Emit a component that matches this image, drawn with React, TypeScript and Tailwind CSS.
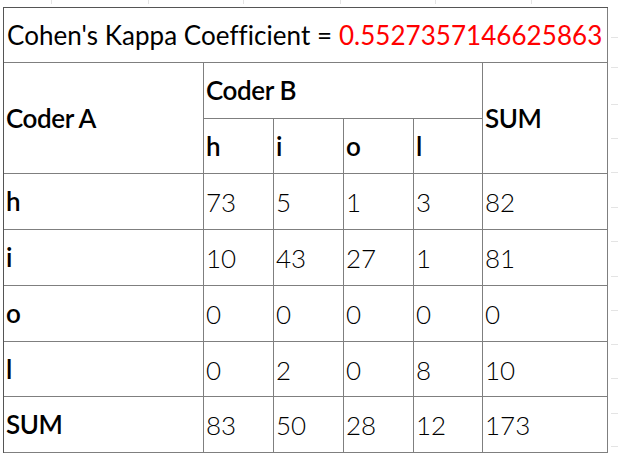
const cols = ['h', 'i', 'o', 'l'];

const rows: { label: string; values: number[] }[] = [
  { label: 'h', values: [73, 5, 1, 3, 82] },
  { label: 'i', values: [10, 43, 27, 1, 81] },
  { label: 'o', values: [0, 0, 0, 0, 0] },
  { label: 'l', values: [0, 2, 0, 8, 10] },
  { label: 'SUM', values: [83, 50, 28, 12, 173] },
];

const cell = 'flex items-center border-r border-b border-[#7f7f7f] pl-[2px]';
const label = `${cell} text-[26px] font-semibold tracking-[-0.4px] text-black`;
const num = `${cell} pt-[2px] text-[26px] font-light text-black`;

export default function App() {
  return (
    <div
      className="relative h-[460px] w-[618px] overflow-hidden bg-white"
      style={{ fontFamily: 'Lato, "Open Sans", sans-serif' }}
    >
      {/* faint sheet gridline stubs around the table */}
      {[51, 148, 243, 340, 435, 531].map((x) => (
        <div key={x} className="absolute top-0 h-[4px] w-px bg-[#e4e4e4]" style={{ left: x }} />
      ))}
      {[37, 67, 104, 138, 172, 207, 241, 276, 310, 344, 378, 413, 446].map((y) => (
        <div key={y} className="absolute right-0 h-px w-[7px] bg-[#e4e4e4]" style={{ top: y }} />
      ))}

      <div className="ml-[3px] mt-[7px] grid w-[605px] grid-cols-[200px_70px_70px_70px_69px_125px] grid-rows-[55px_56px_55px_56px_56px_56px_55px_56px] border-l border-t border-[#555]">
        <div className={`${cell} col-span-6 pl-[3px] text-[26px] tracking-[0.05px] whitespace-nowrap text-black`}>
          Cohen's Kappa Coefficient =&nbsp;<span className="text-[#ff0000]">0.5527357146625863</span>
        </div>

        <div className={`${label} row-span-2`}>Coder A</div>
        <div className={`${label} col-span-4`}>Coder B</div>
        <div className={`${label} row-span-2`}>SUM</div>
        {cols.map((c) => (
          <div key={c} className={label}>
            {c}
          </div>
        ))}

        {rows.map((r) => (
          <Row key={r.label} label={r.label} values={r.values} />
        ))}
      </div>
    </div>
  );
}

function Row({ label: name, values }: { label: string; values: number[] }) {
  return (
    <>
      <div className={label}>{name}</div>
      {values.map((v, i) => (
        <div key={i} className={num}>
          {v}
        </div>
      ))}
    </>
  );
}
